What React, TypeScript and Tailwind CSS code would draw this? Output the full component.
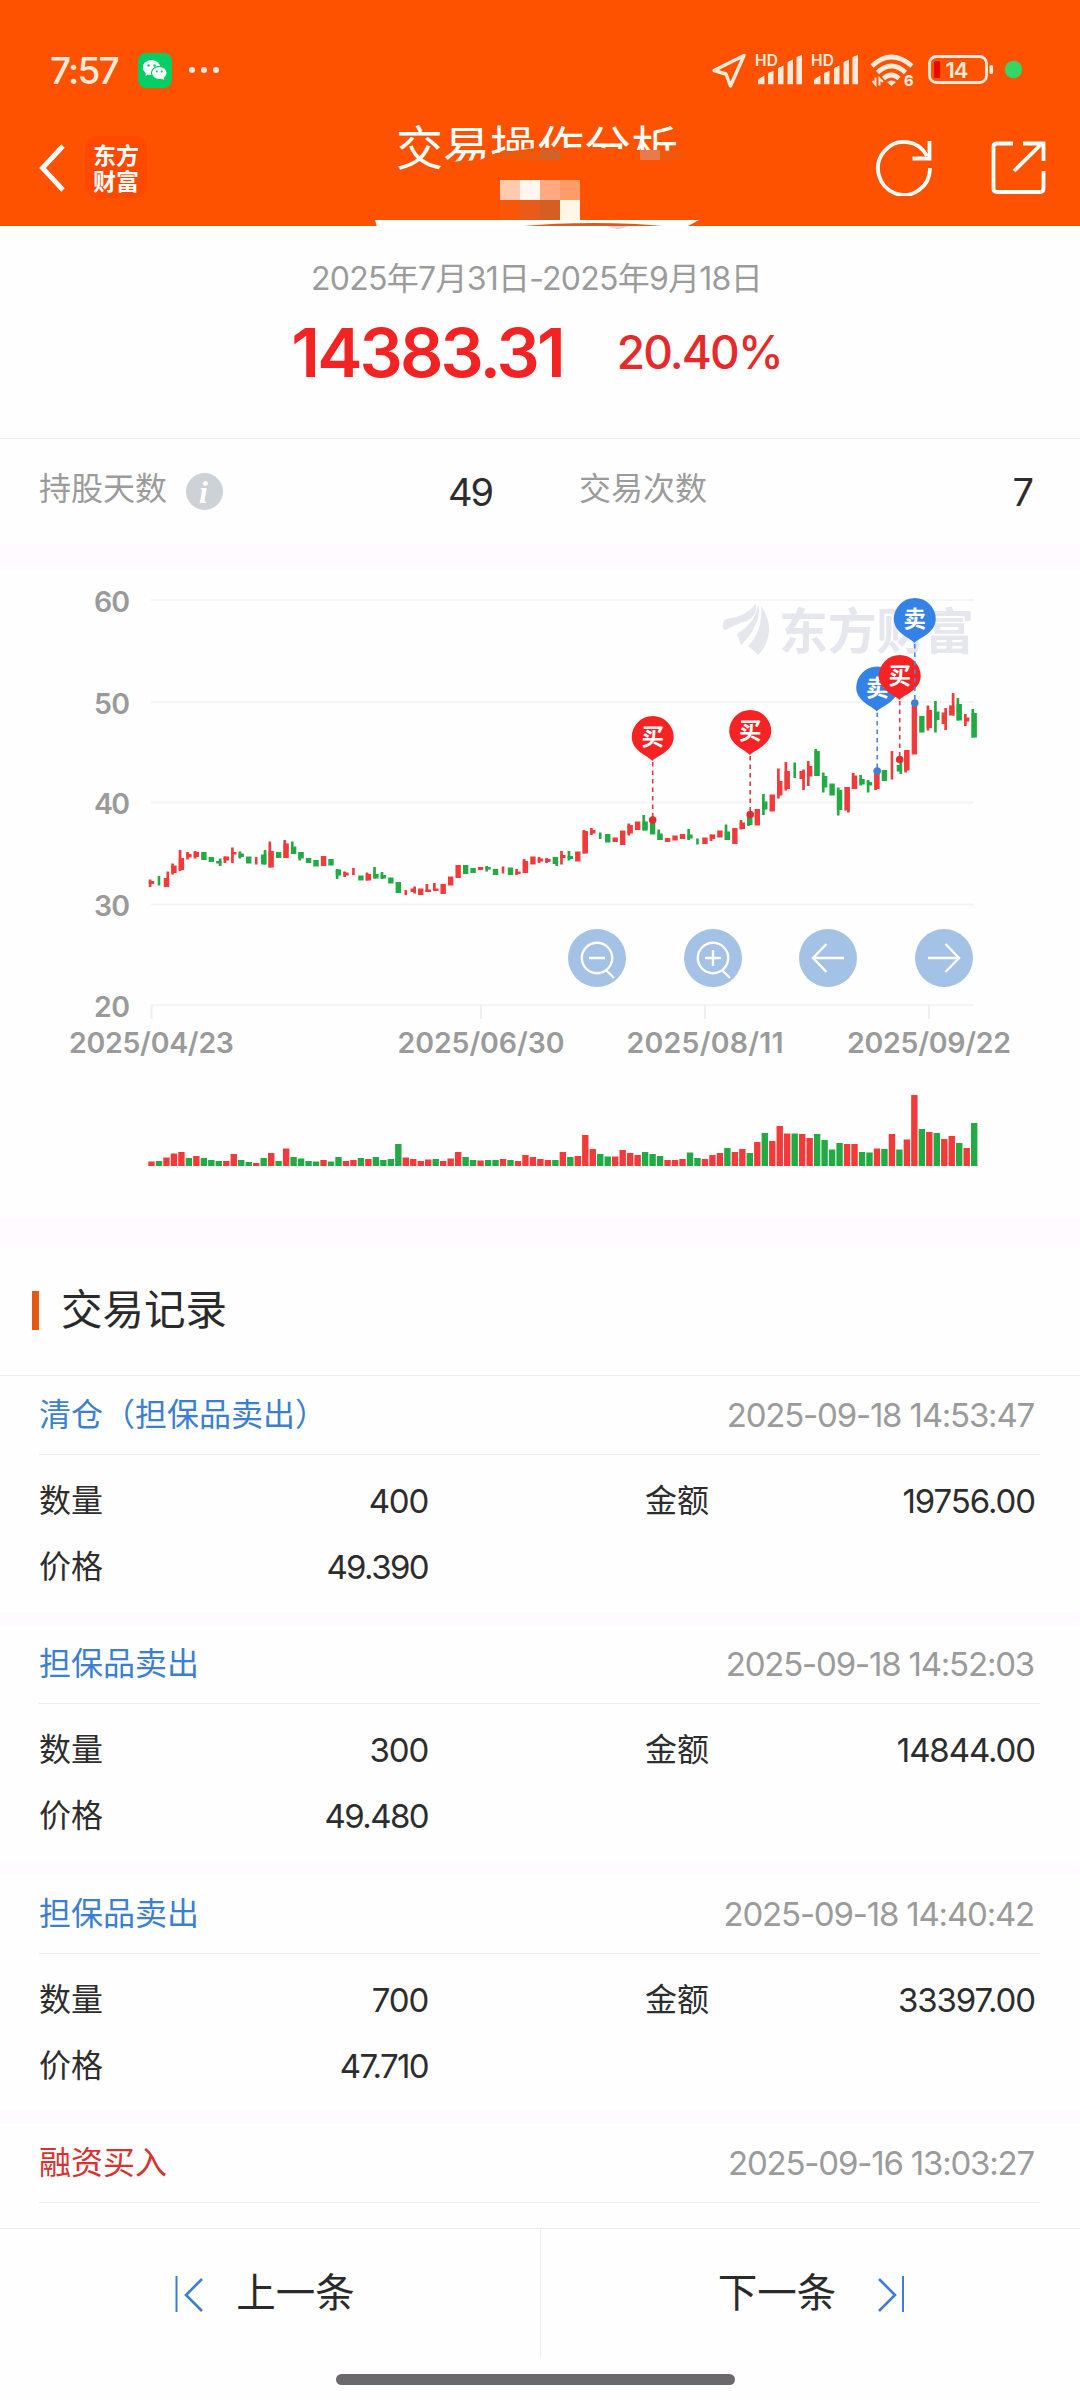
import type { ReactNode } from "react";

type Direction = "up" | "down";

interface TradeRecord {
  readonly title: string;
  readonly side: "buy" | "sell";
  readonly time: string;
  readonly quantity?: string;
  readonly amount?: string;
  readonly price?: string;
}

const RECORDS: ReadonlyArray<TradeRecord> = [
  {
    title: "清仓（担保品卖出）",
    side: "sell",
    time: "2025-09-18 14:53:47",
    quantity: "400",
    amount: "19756.00",
    price: "49.390",
  },
  {
    title: "担保品卖出",
    side: "sell",
    time: "2025-09-18 14:52:03",
    quantity: "300",
    amount: "14844.00",
    price: "49.480",
  },
  {
    title: "担保品卖出",
    side: "sell",
    time: "2025-09-18 14:40:42",
    quantity: "700",
    amount: "33397.00",
    price: "47.710",
  },
  { title: "融资买入", side: "buy", time: "2025-09-16 13:03:27" },
];

const UP = "#f23a3b";
const DOWN = "#22aa45";

// Chart space: x matches the page, y starts at the top of the chart panel.
const CHART_TOP = 569;
const FIRST_X = 151.5;
const STEP = 7.479;
const VOLUME_BASE = 1166 - CHART_TOP;

// Signed volume bars: positive closes up, negative closes down.
const VOLUMES: ReadonlyArray<number> = [
  4.5, -5, 8.5, 12.5, 14, -8, 10, -8, -6, -5, 5, 12, -6, -4, 3, -8, 13, -5, 17.5, -9,
  -7.5, -5, -4.5, 6, -4.5, -9, 5, 6, -8, 7, -9, -6, -7, -22, 8.5, 7, 5, 6.5, -7, 5,
  7.5, 14, -9, -6, 5.5, -6, -6, 7, -6, 5, 11, 9, 7, 6, -6, 14, -9, 10, 31, 17,
  -12, -9.5, 9.5, 16, 13, 11, -14, -12, -10, 6, 6, 7, -13.5, -8, 7, 11, 13, -18, 14, 17,
  -13, 24, -33, 25, 40, 32.5, -32.5, 32, 28, -32, -26, -16.5, -23, 22, 22, -14, -13.5, 17.5, -17, 32,
  -16.5, 26.5, 71, -37, 34, -33, 27, 30, -23, 18, -43,
];

// [body top, body bottom, wick top, wick bottom]; two entries mean no wick,
// a trailing "r" puts the wick on the right edge, "t" draws a bare wick.
type Candle = readonly [Direction, ...Array<number | "r" | "t">];
const u = (...v: Array<number | "r" | "t">): Candle => ["up", ...v];
const d = (...v: Array<number | "r" | "t">): Candle => ["down", ...v];

const CANDLES: ReadonlyArray<Candle> = [
  u(881, 884, 879.5, 887), d(876, 885.5, "t"), u(878, 887, 871.5, 887, "r"), u(865.5, 873, 863.5, 874.5),
  u(858, 870, 850, 871), u(854, 857.5, 852, 859.5), u(852, 857, 851, 858.5), d(852, 860),
  d(857, 862), d(861, 863.5, 858.5, 866, "r"), u(856.5, 860.5, 856.5, 863), u(852, 854.5, 847.5, 863),
  d(853.5, 857, 851.5, 858.5), d(856.5, 863.5), u(857, 864.5, "t"), d(854.5, 864.5, 850, 864.5, "r"),
  u(851, 867.5, 841.5, 867.5), d(852, 858), u(843.5, 858, 840, 858), d(846.5, 854, 841.5, 854),
  d(852, 858.5, 852, 860.5), d(858, 863), d(860, 866.5), u(856, 866), d(859, 865.5),
  d(869.5, 875.5, 869, 879), u(872.5, 875.5, 871.5, 877), u(868, 875, "t"), d(875.5, 880.5),
  u(874, 880.5, 872.5, 880.5), d(874, 878.5, 867, 878.5), d(875, 878.5, 872, 879), d(877.5, 883.5),
  d(882, 893), u(890, 895, "t"), u(888.5, 892, 886.5, 893.5, "r"), u(888.5, 895), u(889.5, 892, 884, 892),
  u(888.5, 891, 883, 891), u(884, 894), u(876.5, 885.5), u(865, 878), d(865, 874), d(868, 873),
  u(867, 870), d(867, 869.5, 866, 871.5), d(869, 875), u(866.5, 873.5, "t"), d(867.5, 875),
  u(871.5, 874, 869, 875), u(861, 873, 859, 873), u(856.5, 864.5), u(858.5, 861.5, 857, 863),
  u(859, 862, 858, 863), d(857, 864, 857, 866, "r"), u(855, 858, 851, 864.5), d(856, 859, 851, 860.5),
  u(851.5, 861.5), u(831, 853.5, 830, 853.5), u(830, 833.5, 828, 835), d(832.5, 839, "t"),
  d(834, 842.5), u(837.5, 842), u(830.5, 845), u(825, 833.5, 823.5, 835.5), u(821.5, 830),
  d(821.5, 830.5, 815, 830.5), d(823, 834.5), d(833.5, 840, 829.5, 840), u(838, 842), u(835.5, 840.5),
  u(834, 839), d(834.5, 838.5, 829, 840), d(838.5, 844.5, "t"), u(837.5, 844), u(834.5, 839, 834.5, 841),
  u(830.5, 837.5), d(831.5, 840, 824.5, 840), u(828, 844), u(822.5, 829, 820, 829.5),
  d(818, 825, 816.5, 826), u(809, 825.5), d(801.5, 809.5, 794, 815), u(794.5, 811.5),
  u(781, 795.5, 768.5, 798.5), u(771, 789, 762, 790.5), d(762.5, 778, "t"), u(771, 779, 769.5, 790, "r"),
  u(766, 776.5, 761, 786), d(751, 776, 749, 776), d(776, 787.5, 772.5, 792.5), d(783.5, 795.5),
  d(790, 810, 787.5, 815.5), u(787, 810.5, 787, 812.5, "r"), u(775.5, 789, 773, 789), d(779, 784.5, 775, 785.5),
  d(782, 785.5, 780, 792.5), u(773.5, 789, 773, 790), d(770, 781), u(751, 779.5, "t"),
  d(765, 771.5, 761.5, 774, "r"), u(750, 770.5, 750, 772.5), u(706, 754.5), d(716, 732.5),
  u(710, 728, 705.5, 730.5), d(711.5, 720, 701, 732.5), u(712.5, 724, 708, 730, "r"),
  u(705.5, 715.5, 693, 715.5, "r"), d(704, 720.5, 698, 720.5), u(717.5, 721.5, 714, 726), d(713, 737.5, 709, 737.5),
];

const GRID = [
  { label: "60", y: 600 },
  { label: "50", y: 702 },
  { label: "40", y: 802.5 },
  { label: "30", y: 904.5 },
  { label: "20", y: 1005 },
];

const DATES = [
  { label: "2025/04/23", x: 151.5, width: 163 },
  { label: "2025/06/30", x: 481, width: 165 },
  { label: "2025/08/11", x: 705, width: 155 },
  { label: "2025/09/22", x: 929, width: 162 },
];

const MARKERS = [
  { side: "买", x: 652.7, top: 716, dot: 820 },
  { side: "买", x: 750.2, top: 710, dot: 814.5 },
  { side: "卖", x: 877.2, top: 666.5, dot: 771 },
  { side: "买", x: 899.7, top: 655, dot: 759.5 },
  { side: "卖", x: 914.8, top: 598, dot: 703 },
];

function StatusBar() {
  return (
    <div className="flex h-[140px] items-center pl-[50px] text-[#ffeadb]">
      <span className="w-[70px] text-[37px] leading-none font-medium tracking-[-1.8px]">7:57</span>
      <svg className="ml-[18px]" width="34" height="35" viewBox="0 0 34 35">
        <rect width="34" height="35" rx="8" fill="#05cf63" />
        <ellipse cx="13.5" cy="14.5" rx="8.7" ry="7.4" fill="#fff" />
        <path d="M8 19l-.5 4 4-2.2z" fill="#fff" />
        <ellipse cx="21.3" cy="20" rx="7.8" ry="6.7" fill="#fff" stroke="#05cf63" strokeWidth="1.2" />
        <path d="M22 25l4 2-.5-4z" fill="#fff" />
        <g fill="#05cf63">
          <circle cx="10.5" cy="12.5" r="1.2" />
          <circle cx="16.5" cy="12.5" r="1.2" />
          <circle cx="18.8" cy="18.5" r="1" />
          <circle cx="23.8" cy="18.5" r="1" />
        </g>
      </svg>
      <div className="ml-[17px] flex gap-[6px]">
        <span className="size-[6px] rounded-full bg-[#ffeadb]" />
        <span className="size-[6px] rounded-full bg-[#ffeadb]" />
        <span className="size-[6px] rounded-full bg-[#ffeadb]" />
      </div>
      <svg className="mr-[56px] ml-auto" width="314" height="40" viewBox="710 50 314 40" fill="#ffeadb">
        <path d="M714 70.5L744 55.5 730.5 86 726 74z" fill="none" stroke="#ffeadb" strokeWidth="3.4" strokeLinejoin="round" />
        {[0, 56].map((dx) => (
          <g key={dx} transform={`translate(${dx} 0)`}>
            <text x="755" y="66" fontSize="15.5" fontWeight="600" textLength="23">HD</text>
            <path d="M758 81q0-2 2-3l4.500-2.500v8.800h-6.500zM768 74q0-1 1-1.500l4.500-1.500v13.300h-5.500zM778 69q0-1 1-1.500l4.500-2v18.800h-5.500zM787.500 63q0-1 1-1.500l4.500-2v24.800h-5.500zM796.500 58q0-1 1-1.500l4.500-1.500v29.300h-5.500z" />
          </g>
        ))}
        <g fill="none" stroke="#ffeadb" strokeWidth="4.6">
          <path d="M872 66q19-18 40 0" />
          <path d="M877.5 72.5q14-13 28 0" />
          <path d="M883.5 78.5q8-7 15.5 0" />
        </g>
        <path d="M887 82q4.500-3 9 0l-4.500 4z" />
        <path d="M872.500 81l3 3.500v-7M879.500 85.500v-7l3.500 3.500" fill="none" stroke="#ffeadb" strokeWidth="2" />
        <text x="904" y="86" fontSize="14.5" fontWeight="800">6</text>
        <rect x="929.5" y="56.5" width="57" height="26" rx="7" fill="none" stroke="#ffeadb" strokeWidth="2.8" />
        <rect x="989.5" y="65" width="3.5" height="9" rx="1.5" />
        <rect x="934" y="61" width="6.200" height="17" rx="1.5" fill="#e60a00" />
        <text x="945.5" y="78" fontSize="22" fontWeight="600" textLength="23">14</text>
        <circle cx="1013.5" cy="69.5" r="8.7" fill="#36d565" />
      </svg>
    </div>
  );
}

function Header() {
  return (
    <header className="relative h-[226px] bg-[#ff5200]">
      <StatusBar />
      <div className="-mt-[4px] flex h-[62px] items-center pl-[38px] text-white">
        <svg width="28" height="52" viewBox="0 0 28 52" fill="none" stroke="currentColor" strokeWidth="4.8">
          <path d="M25 5L4.500 27 25 49" />
        </svg>
        <div className="ml-[19px] flex size-[62px] flex-col items-center justify-center rounded-xl bg-[#ff4800] font-['Noto_Sans_CJK_SC',sans-serif] text-[23px] leading-[26px] font-bold">
          <span>东方</span>
          <span>财富</span>
        </div>
        <svg className="ml-auto" width="58" height="58" viewBox="876 138 58 58" fill="none" stroke="currentColor" strokeWidth="3.8">
          <path d="M931 168A26 26.500 0 1 1 928 156" />
          <path d="M930.500 141v17.500H913.500" />
        </svg>
        <svg className="mr-[33px] ml-[56px]" width="58" height="58" viewBox="990 139 58 58" fill="none" stroke="currentColor" strokeWidth="3.8">
          <path d="M1014 144.500H998q-3.500 0-3.500 3.500v41.500q0 3.500 3.500 3.500h43q3.500 0 3.500-3.500V172" />
          <path d="M1024 144.500h20.500V162M1015 172l28-27.500" />
        </svg>
      </div>
      <h1 className="absolute top-[116px] left-[396px] text-[47px] leading-[64px] font-normal whitespace-nowrap text-white [clip-path:polygon(0_0,290px_0,290px_35px,240px_34px,205px_32px,140px_32px,100px_37px,84px_44px,50px_46px,50px_64px,0_64px)]">
        交易操作分析
      </h1>
      {/* censored account name */}
      <svg className="absolute top-[148px] left-[370px]" width="340" height="84" viewBox="370 148 340 84">
        <path fill="#ee5a0c" d="M500 152h40v8h-40zM660 151h20v9h-20z" />
        <path fill="#cf6329" d="M540 150h20v10h-20z" />
        <path fill="#e97a4b" d="M640 150h20v10h-20z" />
        <path fill="#ffcaad" d="M500 180h20v20h-20z" />
        <path fill="#fff7ee" d="M520 180h20v20h-20z" />
        <path fill="#ffa983" d="M540 180h20v20h-20z" />
        <path fill="#ff9a69" d="M560 180h20v20h-20z" />
        <path fill="#f75708" d="M500 200h20v20h-20z" />
        <path fill="#e85b18" d="M520 200h20v20h-20z" />
        <path fill="#d55e22" d="M540 200h20v20h-20z" />
        <path fill="#fff6e5" d="M560 200h20v20h-20z" />
        <path fill="#fff" d="M375 220h324l-11 6v1H377z" />
        <path fill="#e0591c" d="M524 226q30-3 70-3t68 3z" />
        <path fill="#ddd3d8" d="M608 226h20q-10 6-20 0z" />
      </svg>
    </header>
  );
}

function Summary() {
  return (
    <section>
      <div className="flex h-[213px] flex-col items-center border-b border-[#ececec] pt-[29px]">
        <p className="pr-[7px] text-[32px] leading-[48px] tracking-[-0.75px] text-[#9b9b9b]">
          2025年7月31日-2025年9月18日
        </p>
        <p className="flex items-baseline gap-[54px] pr-[7px] leading-[98px] whitespace-nowrap">
          <span className="text-[68px] font-semibold tracking-[-2.9px] text-[#f42323]">14383.31</span>
          <span className="relative -top-[8px] text-[46px] font-medium tracking-[-1.9px] text-[#e62a2a]">20.40%</span>
        </p>
      </div>
      <div className="flex h-[105px] pt-[26px] leading-[48px]">
        <div className="flex w-[540px] items-start pr-[48px] pl-[39px]">
          <span className="text-[32px] text-[#9b9b9b]">持股天数</span>
          <span className="mt-[8px] ml-[19px] flex size-[37px] items-center justify-center rounded-full bg-[#cdd2d6] pr-[2px] font-['Liberation_Serif',serif] text-[32px] leading-none font-bold text-white italic">
            i
          </span>
          <span className="mt-[3px] ml-auto text-[38px] tracking-[-2px] text-[#2d2d2d]">49</span>
        </div>
        <div className="flex w-[540px] items-start pr-[46px] pl-[39px]">
          <span className="text-[32px] text-[#9b9b9b]">交易次数</span>
          <span className="mt-[3px] ml-auto text-[38px] text-[#2d2d2d]">7</span>
        </div>
      </div>
    </section>
  );
}

function CandleShape({ candle, x }: { candle: Candle; x: number }) {
  const [direction, ...rest] = candle;
  const values = rest.filter((v): v is number => typeof v === "number");
  const [top, bottom, wickTop, wickBottom] = values.map((v) => v - CHART_TOP);
  const fill = direction === "up" ? UP : DOWN;

  if (rest.includes("t")) {
    return <rect x={x - 1.3} y={top} width={2.6} height={bottom - top} fill={fill} />;
  }
  return (
    <g fill={fill}>
      <rect x={x - 2.7} y={top} width={5.4} height={bottom - top} />
      {values.length === 4 && (
        <rect x={rest.includes("r") ? x : x - 2.7} y={wickTop} width={2.7} height={wickBottom - wickTop} />
      )}
    </g>
  );
}

function TradeMarker({ side, x, top, dot }: (typeof MARKERS)[number]) {
  const buy = side === "买";
  const y = top - CHART_TOP;
  return (
    <g>
      <path
        d={`M${x} ${y + 46}V${dot - CHART_TOP}`}
        stroke={buy ? "#d53a40" : "#4a86d6"}
        strokeWidth="1.6"
        strokeDasharray="4.5 4"
      />
      <circle cx={x} cy={dot - CHART_TOP} r="3.8" fill={buy ? "#e32a2c" : "#3f80d4"} />
      <path
        d={`M${x - 0.5} ${y + 45}C${x - 4} ${y + 40} ${x - 21} ${y + 35} ${x - 21} ${y + 21}a21 21 0 0 1 42 0C${x + 21} ${y + 35} ${x + 4} ${y + 40} ${x - 0.5} ${y + 45}z`}
        fill={buy ? "#f52323" : "#3482e6"}
      />
      <text x={x} y={y + 29} textAnchor="middle" fontSize="22.5" fontWeight="700" fill="#fff">
        {side}
      </text>
    </g>
  );
}

function ControlButton({ children }: { children: ReactNode }) {
  return (
    <button type="button" className="size-[58px] rounded-full bg-[#a4c1e6]">
      <svg width="58" height="58" viewBox="-29 -29 58 58" fill="none" stroke="#fff" strokeWidth="2.4">
        {children}
      </svg>
    </button>
  );
}

function Chart() {
  return (
    <section className="relative h-[649px]">
      <svg width="1080" height="649" viewBox="0 0 1080 649">
        {GRID.map((g) => (
          <g key={g.label}>
            <path d={`M151 ${g.y - CHART_TOP}H974`} stroke="#f4f4f5" strokeWidth="2" />
            <text
              x="130"
              y={g.y - CHART_TOP + 11.5}
              textAnchor="end"
              fontSize="28.5"
              fontWeight="600"
              fill="#9a9a9a"
              textLength="36"
            >
              {g.label}
            </text>
          </g>
        ))}
        {DATES.map((t) => (
          <g key={t.label}>
            <path d={`M${t.x} ${1005 - CHART_TOP}v14`} stroke="#efefef" strokeWidth="2" />
            <text
              x={t.x}
              y={1053 - CHART_TOP}
              textAnchor="middle"
              fontSize="28.5"
              fontWeight="600"
              fill="#9a9a9a"
              textLength={t.width + 2}
            >
              {t.label}
            </text>
          </g>
        ))}

        <g fill="#e6e6ef" transform={`translate(0 ${-CHART_TOP})`}>
          <path d="M723 624q0-5 6-5.500Q746 616 756 604q2 11-9 17-13 4-21 9-4 0-3-6z" />
          <path d="M758 605q3 10-3 21-5 11-14 19l-4-11q18-11 21-29z" />
          <path d="M761 606q9 12 8 26-2 15-11 23-4-5-10-9 15-15 13-40z" />
          <text x="779" y="649" fontSize="49" fontWeight="700" textLength="195">东方财富</text>
        </g>

        {CANDLES.map((candle, i) => (
          <CandleShape key={i} candle={candle} x={FIRST_X + i * STEP} />
        ))}
        {VOLUMES.map((v, i) => (
          <rect
            key={i}
            x={FIRST_X + i * STEP - 3.2}
            y={VOLUME_BASE - Math.abs(v)}
            width={6.4}
            height={Math.abs(v)}
            fill={v > 0 ? UP : DOWN}
          />
        ))}
        {MARKERS.map((m) => (
          <TradeMarker key={m.x} {...m} />
        ))}
      </svg>
      <div className="absolute top-[360px] left-[568px] flex w-[405px] justify-between">
        <ControlButton>
          <circle r="15.200" />
          <path d="M9.500 12.500l7.500 7.500M-8 0H8" />
        </ControlButton>
        <ControlButton>
          <circle r="15.200" />
          <path d="M9.500 12.500l7.500 7.500M-8 0H8M0-8V8" />
        </ControlButton>
        <ControlButton>
          <path d="M16 0H-15M-1.500-14L-15 0-1.500 14" />
        </ControlButton>
        <ControlButton>
          <path d="M-16 0H15M1.500-14L15 0 1.500 14" />
        </ControlButton>
      </div>
    </section>
  );
}

function RecordCard({ record }: { record: TradeRecord }) {
  return (
    <article className="h-[249.33px] text-[32px] leading-[48px] text-[#2d2d2d]">
      <div className="mr-[40px] ml-[39px] flex h-[79px] items-center justify-between border-b border-[#ececec] pr-[6px]">
        <span className={record.side === "buy" ? "text-[#d93030]" : "text-[#3c7fd0]"}>{record.title}</span>
        <span className="text-[33px] tracking-[-1.2px] text-[#9b9b9b]">{record.time}</span>
      </div>
      {record.quantity && (
        <>
          <div className="flex h-[157.33px] flex-col gap-[18px] pt-[22px] pr-[45px] pl-[39px]">
            <div className="flex">
              <span>数量</span>
              <span className="w-[325px] text-right text-[33px] tracking-[-1.2px]">{record.quantity}</span>
              <span className="ml-[217px]">金额</span>
              <span className="ml-auto text-[33px] tracking-[-1.1px]">{record.amount}</span>
            </div>
            <div className="flex">
              <span>价格</span>
              <span className="w-[325px] text-right text-[33px] tracking-[-1.6px]">{record.price}</span>
            </div>
          </div>
          <div className="h-[13px] bg-[#fffaff]" />
        </>
      )}
    </article>
  );
}

function BottomBar() {
  return (
    <footer className="absolute inset-x-0 bottom-0 h-[172px] border-t border-[#ececec] bg-[#fefefe] text-[39.5px] text-[#2a2a2a]">
      <div className="flex h-[129px]">
        <button type="button" className="flex w-[541px] items-center justify-center gap-[32px] border-r border-[#ececec] pr-[10px]">
          <svg width="29" height="38" viewBox="0 0 29 38" fill="none" stroke="#3c7fd0" strokeWidth="2.6">
            <path d="M1.500 1v36" strokeWidth="2" />
            <path d="M27 4L11 20l16 16" />
          </svg>
          上一条
        </button>
        <button type="button" className="flex w-[539px] items-center justify-center gap-[40px] pl-[2px]">
          下一条
          <svg width="29" height="38" viewBox="0 0 29 38" fill="none" stroke="#3c7fd0" strokeWidth="2.6">
            <path d="M27 1v36" strokeWidth="2" />
            <path d="M3 4l16 16L3 36" />
          </svg>
        </button>
      </div>
      <div className="mt-[16px] ml-[336px] h-[11px] w-[399px] rounded-full bg-[#6b696c]" />
    </footer>
  );
}

export default function App() {
  return (
    <main className="relative h-[2400px] w-[1080px] overflow-hidden bg-[#fefefe] font-['Inter','Noto_Sans_CJK_SC',sans-serif]">
      <Header />
      <Summary />
      <div className="h-[25px] bg-[#fffaff]" />
      <Chart />
      <div className="h-[27px] bg-[#fffaff]" />
      <section>
        <div className="flex h-[131px] items-center border-b border-[#ececec] pl-[32px]">
          <span className="h-[39px] w-[7px] bg-[#e2590f]" />
          <h2 className="mt-[2px] ml-[22px] text-[41.5px] leading-none text-[#2a2a2a]">交易记录</h2>
        </div>
        {RECORDS.map((r) => (
          <RecordCard key={r.time} record={r} />
        ))}
      </section>
      <BottomBar />
    </main>
  );
}
